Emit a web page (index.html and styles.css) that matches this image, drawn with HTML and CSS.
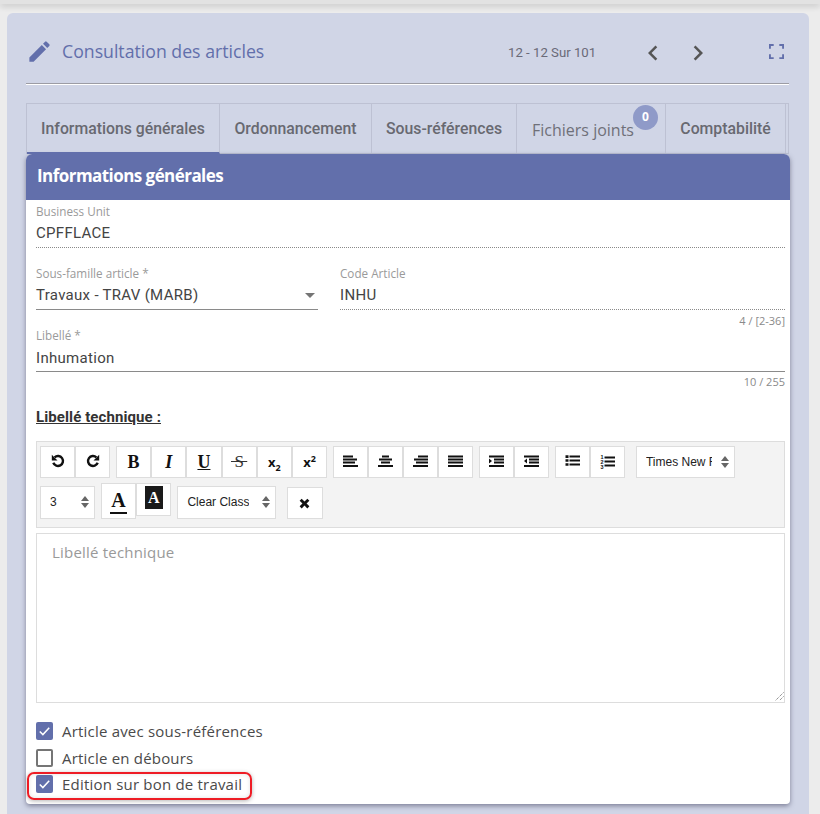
FILE: index.html
```html
<!DOCTYPE html>
<html lang="fr">
<head>
<meta charset="utf-8">
<title>Consultation des articles</title>
<link rel="stylesheet" href="styles.css">
</head>
<body>
<div class="topbar"></div>
<main class="card">
  <header class="head">
    <svg class="pencil" viewBox="0 0 24 24"><path d="M3 17.25V21h3.75L17.81 9.94l-3.75-3.75L3 17.25zM20.71 7.04a1 1 0 0 0 0-1.41l-2.34-2.34a1 1 0 0 0-1.41 0l-1.83 1.83 3.75 3.75 1.83-1.83z"/></svg>
    <h1 class="title">Consultation des articles</h1>
    <span class="pager">12 - 12 Sur 101</span>
    <svg class="chev chev-l" viewBox="0 0 24 24"><path d="M15.41 7.41 14 6l-6 6 6 6 1.41-1.41L10.83 12z"/></svg>
    <svg class="chev chev-r" viewBox="0 0 24 24"><path d="M8.59 16.59 10 18l6-6-6-6-1.41 1.41L13.17 12z"/></svg>
    <svg class="full" viewBox="0 0 16 16"><path d="M0 5V0h5v2H2v3zM11 0h5v5h-2V2h-3zM16 11v5h-5v-2h3v-3zM5 16H0v-5h2v3h3z"/></svg>
  </header>
  <hr class="rule">
  <nav class="tabs">
    <div class="tab tab-active">Informations générales</div>
    <div class="tab tab-ord">Ordonnancement</div>
    <div class="tab tab-sous">Sous-références</div>
    <div class="tab tab-off">Fichiers joints<span class="badge">0</span></div>
    <div class="tab tab-compta">Comptabilité</div>
  </nav>
  <section class="panel">
    <h2 class="panel-title">Informations générales</h2>
    <div class="form">
      <div class="field">
        <label class="lbl">Business Unit</label>
        <div class="val dotted">CPFFLACE</div>
      </div>
      <div class="row">
        <div class="field field-select">
          <label class="lbl">Sous-famille article *</label>
          <div class="val solid select">Travaux - TRAV (MARB)<i class="caret"></i></div>
        </div>
        <div class="field field-code">
          <label class="lbl">Code Article</label>
          <div class="val dotted">INHU</div>
          <div class="hint">4 / [2-36]</div>
        </div>
      </div>
      <div class="field field-lib">
        <label class="lbl">Libellé *</label>
        <div class="val solid val-lib">Inhumation</div>
        <div class="hint">10 / 255</div>
      </div>
      <div class="tech-title">Libellé technique :</div>
      <div class="toolbar">
        <div class="tline">
          <div class="grp">
            <button class="b"><svg viewBox="0 0 16 16" class="ic-h"><path class="arc" d="M4.600 4.300A5 5 0 1 1 3.300 9.800"/><path d="M1.800 1.800v5.700h5.700z"/></svg></button><button class="b"><svg viewBox="0 0 16 16" class="ic-h"><path class="arc" d="M11.400 4.300A5 5 0 1 0 12.700 9.800"/><path d="M14.200 1.800v5.700H8.500z"/></svg></button>
          </div>
          <div class="grp">
            <button class="b t-serif"><b>B</b></button><button class="b t-serif"><i><b>I</b></i></button><button class="b t-serif"><u><b>U</b></u></button><button class="b t-serif t-strike"><s>&#8201;S&#8201;</s></button><button class="b t-sans"><b>x<sub>2</sub></b></button><button class="b t-sans"><b>x<sup>2</sup></b></button>
          </div>
          <div class="grp">
            <button class="b"><svg viewBox="0 0 15 13" class="ic"><path d="M0 .5h10v2H0zM0 3.500h14v2H0zM0 6.500h12v2H0zM0 10h15v2H0z"/></svg></button><button class="b"><svg viewBox="0 0 15 13" class="ic"><path d="M4 .5h7v2H4zM1 3.500h13v2H1zM3 6.500h9v2H3zM0 10h15v2H0z"/></svg></button><button class="b"><svg viewBox="0 0 15 13" class="ic"><path d="M5 .5h10v2H5zM1 3.500h14v2H1zM3 6.500h12v2H3zM0 10h15v2H0z"/></svg></button><button class="b"><svg viewBox="0 0 15 13" class="ic"><path d="M0 .5h15v2H0zM0 3.500h15v2H0zM0 6.500h15v2H0zM0 10h15v2H0z"/></svg></button>
          </div>
          <div class="grp">
            <button class="b"><svg viewBox="0 0 15 13" class="ic"><path d="M0 .5h15v2H0zM5 3.500h10v2H5zM5 6.500h10v2H5zM0 10h15v2H0zM0 3.500l3 2.500-3 2.500z"/></svg></button><button class="b"><svg viewBox="0 0 15 13" class="ic"><path d="M0 .5h15v2H0zM5 3.500h10v2H5zM5 6.500h10v2H5zM0 10h15v2H0zM3 3.500 0 6l3 2.500z"/></svg></button>
          </div>
          <div class="grp">
            <button class="b"><svg viewBox="0 0 15 13" class="ic"><path d="M4.500 .5H15v2H4.500zM4.500 4.500H15v2H4.500zM4.500 8.500H15v2H4.500zM.5 .3h3v2.600h-3zM.5 4.200h3v2.600h-3zM.5 8.200h3v2.600h-3z"/></svg></button><button class="b"><svg viewBox="0 0 15 15" class="ic ic-ol"><path d="M4.500 2.500H15v2H4.500zM4.500 6.500H15v2H4.500zM4.500 10.500H15v2H4.500z"/><text x="0.500" y="4.500" class="mini">1</text><text x="0.500" y="9.500" class="mini">2</text><text x="0.500" y="14.500" class="mini">3</text></svg></button>
          </div>
          <div class="sel sel-font"><span class="sel-txt">Times New R</span><i class="updown"></i></div>
        </div>
        <div class="tline tline-2">
          <div class="sel sel-size"><span class="sel-txt">3</span><i class="updown"></i></div>
          <button class="b b-a t-serif"><b class="a-bar">A</b></button>
          <button class="b b-ah t-serif"><b>A</b></button>
          <div class="sel sel-class"><span class="sel-txt">Clear Class</span><i class="updown"></i></div>
          <button class="b b-x"><svg viewBox="0 0 16 16" class="ic-x"><path d="M2 4.500 4.500 2 8 5.500 11.500 2 14 4.500 10.500 8l3.500 3.500-2.500 2.500L8 10.500 4.500 14 2 11.500 5.500 8z"/></svg></button>
        </div>
      </div>
      <div class="editor">Libellé technique
        <svg class="grip" viewBox="0 0 9 9"><path d="M8.500.5l-8 8M8.500 4.500l-4 4" /></svg>
      </div>
      <ul class="checks">
        <li class="chk"><span class="box on"><svg viewBox="0 0 18 18"><path d="M4 9.500l3.300 3.300L14 5.500"/></svg></span>Article avec sous-références</li>
        <li class="chk"><span class="box"></span>Article en débours</li>
        <li class="chk chk-hl"><span class="box on"><svg viewBox="0 0 18 18"><path d="M4 9.500l3.300 3.300L14 5.500"/></svg></span>Edition sur bon de travail<span class="mark"></span></li>
      </ul>
    </div>
  </section>
</main>
</body>
</html>
```
FILE: styles.css
```css
* { box-sizing: border-box; }
html, body { margin: 0; height: 814px; overflow: hidden; }
body { background: #ececec; font-family: Roboto, sans-serif; color: #333; }
.topbar { height: 4px; background: #e2e2e2; box-shadow: 0 2px 6px rgba(0,0,0,.2); }
.card { margin: 9px 11px 0 7px; height: 820px; background: #d0d5e6; border-radius: 6px; padding: 0 20px 0 19px; }

.head { display: flex; align-items: center; height: 70px; padding-top: 7px; }
.pencil { width: 27px; height: 27px; fill: #626fab; flex: none; }
.title { margin: -2px 0 0 9px; font: 400 17.700px "Open Sans", sans-serif; color: #626fab; width: 446px; flex: none; }
.pager { font: 400 13.200px Roboto, sans-serif; color: #6a6a78; width: 130px; flex: none; margin-top: 1px; }
.chev { width: 30px; height: 30px; fill: #555; flex: none; margin-top: 3px; }
.chev-r { margin-left: 15px; }
.full { width: 15px; height: 15px; fill: #626fab; margin-left: 56px; flex: none; }

.rule { height: 2px; border: 0; margin: 0; background: linear-gradient(#9c9ca4 50%, #fff 50%); }

.tabs { display: flex; margin-top: 18px; height: 51px; border: 1px solid #bdc1d3; }
.tab { display: flex; align-items: center; justify-content: center; position: relative; font: 500 15.800px Roboto, sans-serif; color: #686971; border-right: 1px solid #bdc1d3; height: 49px; flex: none; }
.tab-active { width: 193px; border-bottom: 2px solid #626fab; height: 50px; }
.tab-ord { width: 152px; }
.tab-sous { width: 145px; }
.tab-off { width: 149px; color: #6f7079; font: 400 16px "Open Sans", sans-serif; padding-right: 16px; padding-top: 2px; }
.tab-compta { width: 120px; }
.badge { position: absolute; right: 7px; top: 1px; width: 25px; height: 25px; border-radius: 50%; background: #8f9ac8; color: #fff; font: 700 12px "Open Sans", sans-serif; display: flex; align-items: center; justify-content: center; padding-bottom: 3px; }

.panel { background: #fff; border-radius: 6px 6px 4px 4px; height: 650px; box-shadow: 0 2px 5px rgba(60,60,90,.55); margin-right: -1px; }
.panel-title { margin: 0; height: 46px; background: #626fab; color: #fff; font: 700 17px/44px "Open Sans", sans-serif; letter-spacing: -.55px; padding-left: 11px; border-radius: 6px 6px 0 0; }
.form { padding: 4px 5px 0 10px; }

.field { display: flex; flex-direction: column; }
.lbl { font: 400 11.700px/14px "Open Sans", sans-serif; color: #9a9a9a; }
.val { font: 400 15px/20px Roboto, sans-serif; color: #444; height: 30px; padding-top: 5px; letter-spacing: .3px; }
.val-lib { padding-top: 6px; }
.dotted { border-bottom: 1px dotted #8a8a8a; }
.solid { border-bottom: 1px solid #8a8a8a; }
.row { display: flex; margin-top: 18px; }
.field-select { width: 282px; margin-right: 22px; }
.field-code { flex: 1; }
.select { position: relative; }
.caret { position: absolute; right: 3px; top: 13px; border: 5px solid transparent; border-top: 5px solid #757575; border-bottom: 0; width: 0; height: 0; }
.hint { font: 400 11px/12px "Open Sans", sans-serif; color: #8a8a8a; text-align: right; margin-top: 5px; height: 16px; }
.field-lib { margin-top: -3px; }
.field-lib .hint { margin-top: 4px; height: 17px; }
.tech-title { margin-top: 14px; font: 700 15px/20px Roboto, sans-serif; letter-spacing: .1px; color: #333; text-decoration: underline; }

.toolbar { margin-top: 14px; background: #f3f3f3; border: 1px solid #ddd; height: 87px; padding: 4px 3px 0; }
.tline { display: flex; align-items: flex-start; }
.tline-2 { margin-top: 5px; }
.grp { display: flex; margin-right: 5.600px; flex: none; }
.b { width: 35.200px; height: 32px; padding: 0; background: #fff; border: 1px solid #ddd; display: flex; align-items: center; justify-content: center; color: #111; font-size: 14px; flex: none; }
.ic { width: 15px; height: 13px; fill: #111; margin-top: -2px; }
.ic-ol { height: 15px; }
.mini { font: 700 5.500px "Liberation Sans", sans-serif; fill: #111; }
.ic-h { width: 16px; height: 16px; fill: #111; margin-top: -2px; }
.arc { fill: none; stroke: #111; stroke-width: 2.400; }
.ic-x { width: 13px; height: 13px; fill: #111; }
.t-serif { font: 400 18px "Liberation Serif", serif; }
.t-strike { color: #333; font-size: 17px; }
.t-sans { font: 400 13px "Open Sans", sans-serif; }
.t-sans sub, .t-sans sup { font-size: 9px; line-height: 0; }
.sel { display: flex; align-items: center; justify-content: space-between; height: 32px; background: #fff; border: 1px solid #ddd; font: 400 12px "Liberation Sans", sans-serif; color: #222; padding: 0 5px 0 9px; flex: none; }
.sel-txt { overflow: hidden; white-space: nowrap; }
.sel-font { width: 99px; margin-left: 5px; }
.sel-font .sel-txt { width: 66px; }
.sel-size { width: 55px; margin-top: 3px; height: 33px; padding-bottom: 2px; }
.sel-class { width: 99px; margin: 3px 0 0 6px; height: 33px; padding-bottom: 2px; }
.updown { width: 8px; height: 12px; position: relative; display: block; }
.updown::before, .updown::after { content: ""; position: absolute; left: 0; border: 4px solid transparent; }
.updown::before { top: 0; border-top: 0; border-bottom: 5px solid #666; }
.updown::after { bottom: 0; border-bottom: 0; border-top: 5px solid #666; }
.b-a { margin: 0 0 0 6px; height: 36px; }
.a-bar { display: block; width: 17px; font-size: 20px; line-height: 18px; text-align: center; padding-bottom: 3px; border-bottom: 2px solid #111; margin-top: 3px; font-weight: 700; }
.b-ah { height: 33px; }
.b-ah b { background: #1a1a1a; color: #fff; width: 18px; height: 23px; display: flex; align-items: center; justify-content: center; font-size: 16px; margin-top: -4px; }
.b-x { margin: 4px 0 0 11px; }

.editor { position: relative; margin-top: 5px; height: 170px; border: 1px solid #ddd; padding: 8px 15px; font: 400 15px/20px "Open Sans", sans-serif; letter-spacing: .2px; color: #999; }
.grip { position: absolute; right: 0; bottom: 1px; width: 9px; height: 9px; stroke: #666; stroke-width: 1; stroke-dasharray: 1 1; fill: none; }

.checks { list-style: none; margin: 15px 0 0; padding: 0; }
.chk { position: relative; display: flex; align-items: center; height: 26.500px; font: 400 15px "Open Sans", sans-serif; letter-spacing: .2px; color: #4a4a4a; }
.box { width: 17px; height: 18px; margin-right: 9px; border: 2px solid #757575; border-radius: 2px; background: #fff; display: block; flex: none; }
.box.on { background: #626fab; border: 0; }
.box svg { display: block; width: 17px; height: 18px; fill: none; stroke: #fff; stroke-width: 1.600; }
.mark { position: absolute; left: -9px; top: .5px; width: 225px; height: 28px; border: 2px solid #ee1c25; border-radius: 7px; box-shadow: 0 1px 4px rgba(0,0,0,.3), inset 0 0 4px rgba(0,0,0,.12); }
```
